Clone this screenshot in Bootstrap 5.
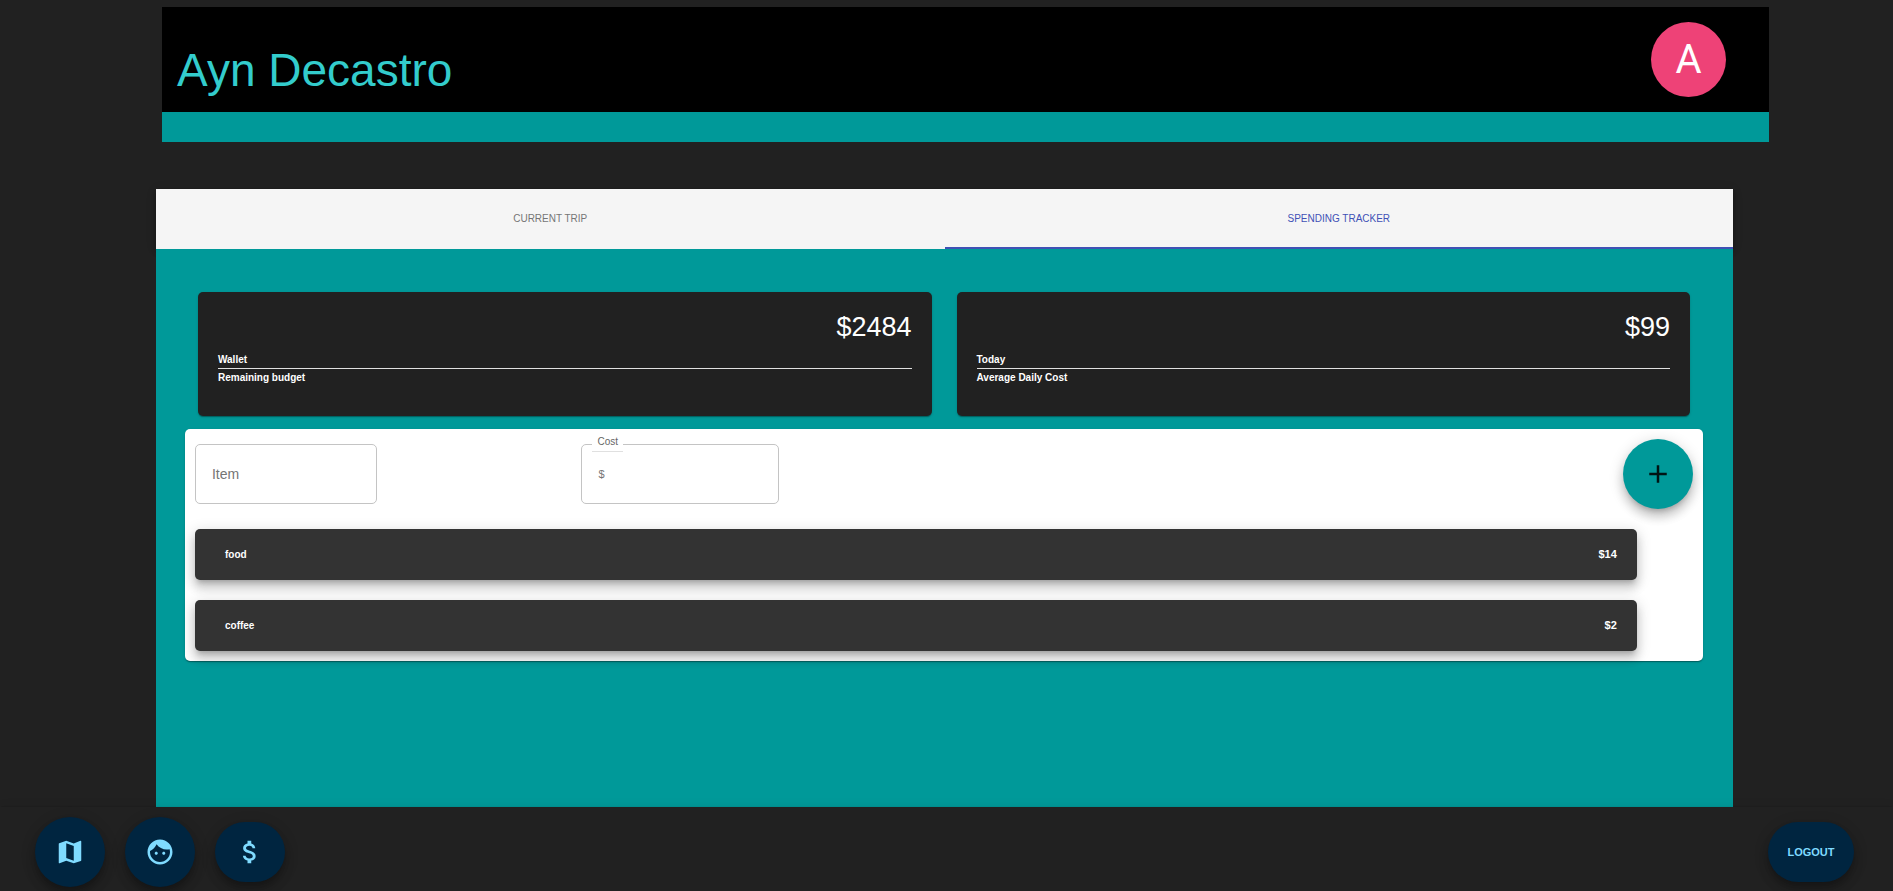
<!DOCTYPE html>
<html lang="en">
<head>
<meta charset="utf-8">
<meta name="viewport" content="width=device-width, initial-scale=1">
<title>Spending Tracker</title>
<link href="https://cdn.jsdelivr.net/npm/bootstrap@5.3.0/dist/css/bootstrap.min.css" rel="stylesheet">
<style>
  :root {
    --teal: #009999;
    --ink: #212121;
    --navy: #002540;
    --sky: #7fdbff;
    --lift-low: 0 2px 1px -1px rgba(0,0,0,.2), 0 1px 1px rgba(0,0,0,.14), 0 1px 3px rgba(0,0,0,.12);
    --lift-mid: 0 2px 4px -1px rgba(0,0,0,.2), 0 4px 5px rgba(0,0,0,.14), 0 1px 10px rgba(0,0,0,.12);
    --lift-high: 0 5px 5px -3px rgba(0,0,0,.2), 0 8px 10px 1px rgba(0,0,0,.14), 0 3px 14px 2px rgba(0,0,0,.12);
  }
  body { background: var(--ink); font-family: "Liberation Sans", Arial, sans-serif; font-size: 11px; line-height: 17px; }
  .profile { margin: 7px 6.55% 47px 8.56%; background: #000; border-bottom: 30px solid var(--teal); }
  .profile-row { height: 105px; padding: 0 43px 0 15px; }
  .profile h1 { color: #33cccc; font-size: 46px; line-height: 56px; margin: 20px 0 0; font-weight: 400; }
  .avatar { width: 75px; height: 75px; background: #ee4277; color: #fff; font: 40px/75px Roboto, sans-serif; }
  .tracker { margin: 0 8.45% 0 8.24%; background: var(--teal); }
  .trip-tabs { background: #f5f5f5; box-shadow: var(--lift-mid); }
  .trip-tabs .nav-link { height: 60px; font-size: 10px; color: #757575; background: none; border: 0; border-radius: 0; padding: 0 0 2px; text-transform: uppercase; }
  .trip-tabs .nav-link.active { color: #3f51b5; background: none; box-shadow: inset 0 -2px #3f51b5; }
  .pane { background: var(--teal); padding: 43px 30px 146px 29px; }
  .totals { gap: 25px; padding: 0 13px; margin-bottom: 13px; }
  .total { background: var(--ink); color: #fff; border: 0; border-radius: 5px; padding: 17px 20px 30px; box-shadow: var(--lift-low); }
  .total .amount { font-size: 27px; line-height: 36px; text-align: right; margin-bottom: 6px; }
  .total h2 { font-size: 10px; line-height: 17px; margin: 0; font-weight: 700; }
  .total h2.top { border-bottom: 1px solid #e0e0e0; }
  .ledger { background: #fff; border: 0; border-radius: 5px; padding: 10px; box-shadow: var(--lift-low); }
  .entry-form { height: 70px; margin-bottom: 20px; }
  .item-col { flex: 0 0 25.8%; }
  .outlined { position: relative; height: 60px; border: 1px solid #c4c4c4; border-radius: 5px; }
  .outlined input { width: 100%; height: 100%; border: 0; outline: 0; background: none; padding: 0 16px; color: #333; }
  .outlined input::placeholder { color: #757575; opacity: 1; }
  .outlined.item { width: 182px; }
  .outlined.item input { font-size: 14px; }
  .outlined.cost { width: 198px; }
  .outlined label { position: absolute; left: 10px; top: -12px; background: #fff; color: #666; font-size: 10px; line-height: 18px; padding: 0 5px; border-bottom: 1px solid #e0e0e0; }
  .expense { width: 96.25%; height: 51px; padding: 0 20px 0 30px; background: #333; color: #fff; border-radius: 5px; box-shadow: var(--lift-high); font-size: 10px; font-weight: 700; }
  .expense .price { font-size: 11px; }
  .expenses { gap: 20px; }
  .fab { width: 70px; height: 70px; padding: 0; border: 0; border-radius: 35px; box-shadow: var(--lift-high); background: var(--navy); color: var(--sky); font-size: 11px; display: flex; align-items: center; justify-content: center; }
  .fab svg { width: 30px; height: 30px; fill: currentColor; }
  .fab.add { background: var(--teal); color: rgba(0,0,0,.87); }
  .fab.flat { height: 60px; border-radius: 30px; }
  .fab.logout { width: 86px; font-weight: 700; }
  .dock { background: var(--ink); height: 84px; padding: 6px 39px 0 35px; gap: 20px; box-shadow: var(--lift-mid); }
</style>
</head>
<body class="d-flex flex-column min-vh-100">
  <header class="profile">
    <div class="profile-row d-flex align-items-center justify-content-between">
      <h1>Ayn Decastro</h1>
      <div class="avatar rounded-circle text-center">A</div>
    </div>
  </header>

  <main class="tracker flex-grow-1">
    <ul class="nav nav-fill nav-justified trip-tabs" role="tablist">
      <li class="nav-item" role="presentation"><button class="nav-link w-100" type="button" role="tab" aria-selected="false">Current Trip</button></li>
      <li class="nav-item" role="presentation"><button class="nav-link active w-100" type="button" role="tab" aria-selected="true">Spending Tracker</button></li>
    </ul>

    <div class="pane position-relative" role="tabpanel">
      <div class="totals d-flex">
        <section class="card total flex-fill w-50">
          <div class="amount">$2484</div>
          <h2 class="top">Wallet</h2>
          <h2>Remaining budget</h2>
        </section>
        <section class="card total flex-fill w-50">
          <div class="amount">$99</div>
          <h2 class="top">Today</h2>
          <h2>Average Daily Cost</h2>
        </section>
      </div>

      <section class="card ledger">
        <form class="entry-form d-flex align-items-center">
          <div class="item-col">
            <div class="outlined item"><input type="text" placeholder="Item" aria-label="Item"></div>
          </div>
          <div class="outlined cost">
            <label for="cost">Cost</label>
            <input id="cost" type="text" placeholder="$">
          </div>
          <button class="fab add ms-auto" type="button" aria-label="Add expense">
            <svg viewBox="0 0 24 24"><path d="M19 13h-6v6h-2v-6H5v-2h6V5h2v6h6v2z"/></svg>
          </button>
        </form>
        <ul class="expenses list-unstyled d-flex flex-column mb-0">
          <li class="expense d-flex align-items-center justify-content-between"><span>food</span><span class="price">$14</span></li>
          <li class="expense d-flex align-items-center justify-content-between"><span>coffee</span><span class="price">$2</span></li>
        </ul>
      </section>
    </div>
  </main>

  <footer class="dock sticky-bottom d-flex align-items-center">
    <button class="fab" type="button" aria-label="Map">
      <svg viewBox="0 0 24 24"><path d="M20.5 3l-.16.03L15 5.1 9 3 3.36 4.9c-.21.07-.36.25-.36.48V20.5c0 .28.22.5.5.5l.16-.03L9 18.9l6 2.1 5.64-1.9c.21-.07.36-.25.36-.48V3.5c0-.28-.22-.5-.5-.5zM15 19l-6-2.11V5l6 2.11V19z"/></svg>
    </button>
    <button class="fab" type="button" aria-label="Profile">
      <svg viewBox="0 0 24 24"><path d="M9 11.75c-.69 0-1.25.56-1.25 1.25s.56 1.25 1.25 1.25 1.25-.56 1.25-1.25-.56-1.25-1.25-1.25zm6 0c-.69 0-1.25.56-1.25 1.25s.56 1.25 1.25 1.25 1.25-.56 1.25-1.25-.56-1.25-1.25-1.25zM12 2C6.48 2 2 6.48 2 12s4.480 10 10 10 10-4.480 10-10S17.520 2 12 2zm0 18c-4.410 0-8-3.590-8-8 0-.29.020-.58.050-.86 2.360-1.050 4.230-2.980 5.210-5.370C11.070 8.330 14.050 10 17.420 10c.78 0 1.530-.09 2.250-.26.210.71.330 1.470.330 2.260 0 4.410-3.590 8-8 8z"/></svg>
    </button>
    <button class="fab flat" type="button" aria-label="Spending">
      <svg viewBox="0 0 24 24"><path d="M11.8 10.9c-2.27-.59-3-1.200-3-2.150 0-1.090 1.010-1.850 2.700-1.850 1.780 0 2.440.85 2.500 2.100h2.210c-.07-1.720-1.120-3.300-3.210-3.810V3h-3v2.160c-1.940.42-3.500 1.680-3.500 3.610 0 2.310 1.910 3.460 4.700 4.130 2.500.6 3 1.480 3 2.410 0 .69-.49 1.790-2.700 1.790-2.060 0-2.870-.92-2.980-2.100h-2.200c.12 2.190 1.760 3.420 3.680 3.830V21h3v-2.150c1.950-.37 3.500-1.500 3.500-3.550 0-2.840-2.430-3.810-4.700-4.400z"/></svg>
    </button>
    <button class="fab flat logout ms-auto" type="button">LOGOUT</button>
  </footer>
<script src="https://cdn.jsdelivr.net/npm/bootstrap@5.3.0/dist/js/bootstrap.bundle.min.js"></script>
</body>
</html>
